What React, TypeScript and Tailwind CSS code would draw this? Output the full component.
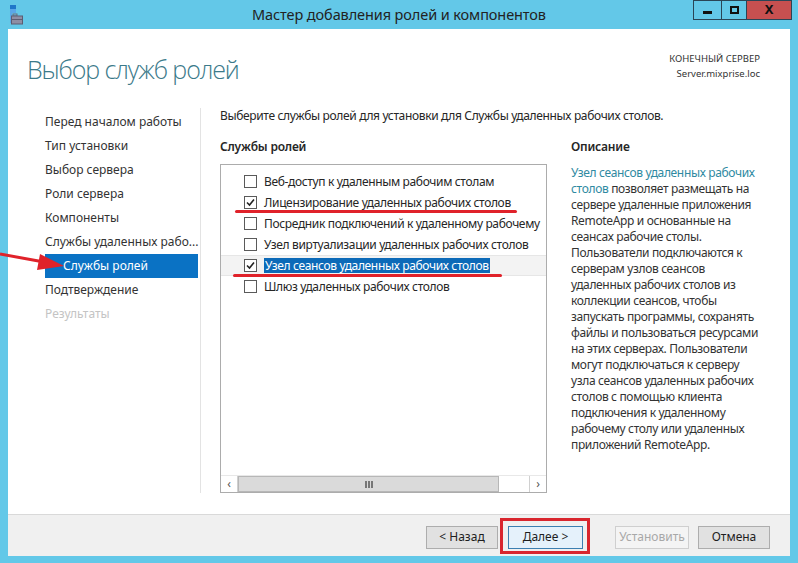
import React from "react";

const navItems = [
  { label: "Перед началом работы" },
  { label: "Тип установки" },
  { label: "Выбор сервера" },
  { label: "Роли сервера" },
  { label: "Компоненты" },
  { label: "Службы удаленных рабо..." },
  { label: "Службы ролей", active: true, sub: true },
  { label: "Подтверждение" },
  { label: "Результаты", disabled: true },
];

const roles = [
  { label: "Веб-доступ к удаленным рабочим столам", checked: false },
  { label: "Лицензирование удаленных рабочих столов", checked: true, mark: "left-[14px] w-[282px]" },
  { label: "Посредник подключений к удаленному рабочему", checked: false },
  { label: "Узел виртуализации удаленных рабочих столов", checked: false },
  { label: "Узел сеансов удаленных рабочих столов", checked: true, selected: true, mark: "left-[12px] w-[269px]" },
  { label: "Шлюз удаленных рабочих столов", checked: false },
];

const descLines = [
  "сервере удаленные приложения",
  "RemoteApp и основанные на",
  "сеансах рабочие столы.",
  "Пользователи подключаются к",
  "серверам узлов сеансов",
  "удаленных рабочих столов из",
  "коллекции сеансов, чтобы",
  "запускать программы, сохранять",
  "файлы и пользоваться ресурсами",
  "на этих серверах. Пользователи",
  "могут подключаться к серверу",
  "узла сеансов удаленных рабочих",
  "столов с помощью клиента",
  "подключения к удаленному",
  "рабочему столу или удаленных",
  "приложений RemoteApp.",
];

function Checkbox({ checked }: { checked: boolean }) {
  return (
    <span className="flex h-[13px] w-[13px] shrink-0 items-center justify-center border border-[#5a5a5a] bg-white">
      {checked && (
        <svg width="11" height="11" viewBox="0 0 11 11">
          <path d="M2 5.5 L4.5 8 L9 2.5" fill="none" stroke="#222" strokeWidth="1.6" />
        </svg>
      )}
    </span>
  );
}

function WinButton({ children, primary, disabled }: { children: React.ReactNode; primary?: boolean; disabled?: boolean }) {
  return (
    <div
      className={
        "flex h-[23px] items-center justify-center border text-[12px] " +
        (primary
          ? "w-[75px] border-[#3c7fb1] bg-[#e5f1fb] text-[#1e1e1e]"
          : disabled
          ? "w-[74px] border-[#cfcfcf] bg-[#f4f4f4] text-[#a8a8a8]"
          : "w-[72px] border-[#adadad] bg-[#e1e1e1] text-[#1e1e1e]")
      }
    >
      {children}
    </div>
  );
}

export default function App() {
  return (
    <div className="relative flex h-[563px] w-[798px] flex-col overflow-hidden bg-[#63c8e8] font-['Noto_Sans',sans-serif] text-[#262626]">
      {/* title bar */}
      <div className="grid h-[29px] grid-cols-[1fr_auto_1fr]">
        <div className="pl-[9px] pt-[5px]">
          <svg width="16" height="20" viewBox="0 0 16 20">
            <rect x="1" y="0" width="6" height="4" fill="#1f77c9" />
            <rect x="1" y="4" width="6" height="4" fill="#5aa7e8" />
            <rect x="1" y="8" width="2" height="10" fill="#5aa7e8" />
            <rect x="4" y="9" width="4" height="2" fill="none" stroke="#6b6b80" strokeWidth="1" />
            <rect x="2.5" y="11" width="11" height="8" fill="#8e8ea4" stroke="#5d5d72" strokeWidth="1" />
            <rect x="2.5" y="14" width="11" height="1" fill="#5d5d72" />
          </svg>
        </div>
        <div className="pt-[4px] text-[14.5px] tracking-[-0.1px] text-[#222]">Мастер добавления ролей и компонентов</div>
        <div className="flex justify-end pr-[6px]">
          <div className="flex h-[20px] w-[28px] items-center justify-center border border-r-0 border-[#2a4556]">
            <span className="mt-[4px] h-[3px] w-[9px] bg-[#111]" />
          </div>
          <div className="flex h-[20px] w-[26px] items-center justify-center border border-[#2a4556]">
            <span className="h-[8px] w-[9px] border-2 border-[#111]" />
          </div>
          <div className="flex h-[20px] w-[45px] items-center justify-center border border-l-0 border-[#2a4556] bg-[#c75050] text-[13px] font-bold text-[#111]">
            X
          </div>
        </div>
      </div>

      {/* window body */}
      <div className="mx-[8px] mb-[7px] flex flex-1 flex-col bg-white">
        <div className="flex h-[79px] justify-between">
          <div className="pl-[19px] pt-[22px] font-['Open_Sans',sans-serif] text-[25px] font-light tracking-[-1.1px] text-[#3b7a8a]">
            Выбор служб ролей
          </div>
          <div className="pr-[30px] pt-[22px] text-right text-[9.5px] leading-[15px] text-[#333]">
            <div>КОНЕЧНЫЙ СЕРВЕР</div>
            <div>Server.mixprise.loc</div>
          </div>
        </div>

        <div className="flex flex-1 pb-[21px]">
          <div className="w-[193px] border-r border-[#e3e3e3] pl-[37px] pr-[2px] pt-[2px]">
            {navItems.map((n) => (
              <div
                key={n.label}
                className={
                  "h-[24px] whitespace-nowrap text-[12px] leading-[24px] " +
                  (n.active
                    ? "bg-[#0a72c4] pl-[18px] text-white"
                    : n.disabled
                    ? "text-[#c4c4c4]"
                    : "text-[#333]")
                }
              >
                {n.label}
              </div>
            ))}
          </div>

          <div className="flex flex-1 flex-col pl-[19px] tracking-[-0.35px]">
            <div className="h-[16px] text-[12px] leading-[16px] text-[#262626]">
              Выберите службы ролей для установки для Службы удаленных рабочих столов.
            </div>
            <div className="mt-[15px] flex flex-1">
              <div className="flex w-[327px] flex-col">
                <div className="h-[16px] text-[12px] font-semibold leading-[16px] tracking-[-0.2px] text-[#262626]">Службы ролей</div>
                <div className="mt-[9px] flex flex-1 flex-col overflow-hidden border border-[#acacac]">
                  <div className="flex-1 pt-[6px]">
                    {roles.map((r) => (
                      <div
                        key={r.label}
                        className={
                          "relative flex h-[21px] items-center gap-[7px] whitespace-nowrap pl-[23px] text-[12px] " +
                          (r.selected ? "border-y border-[#e6e6e6] bg-[#f3f3f3]" : "")
                        }
                      >
                        <Checkbox checked={r.checked} />
                        <span className={r.selected ? "bg-[#0c6ab8] px-[1px] leading-[15px] text-white" : "text-[#262626]"}>
                          {r.label}
                        </span>
                        {r.mark && <span className={"absolute top-[18px] h-[3px] rounded-full bg-[#e0222a] " + r.mark} />}
                      </div>
                    ))}
                  </div>
                  <div className="flex h-[17px] border-t border-[#e8e8e8] bg-white">
                    <div className="flex w-[17px] items-center justify-center border-r border-[#d0d0d0] text-[12px] text-[#555]">‹</div>
                    <div className="flex w-[261px] items-center justify-center border border-[#b7b7b7] bg-[#dadada]">
                      <svg width="8" height="7" viewBox="0 0 8 7">
                        <rect x="0" y="0" width="2" height="7" fill="#777" />
                        <rect x="3" y="0" width="2" height="7" fill="#777" />
                        <rect x="6" y="0" width="2" height="7" fill="#777" />
                      </svg>
                    </div>
                    <div className="flex-1" />
                    <div className="flex w-[17px] items-center justify-center border-l border-[#d0d0d0] text-[12px] text-[#555]">›</div>
                  </div>
                </div>
              </div>

              <div className="ml-[24px] flex-1">
                <div className="h-[16px] text-[12px] font-semibold leading-[16px] tracking-[-0.2px] text-[#262626]">Описание</div>
                <div className="mt-[10px] whitespace-nowrap text-[12px] leading-[16px] text-[#333]">
                  <div className="text-[#2f8aa2]">Узел сеансов удаленных рабочих</div>
                  <div>
                    <span className="text-[#2f8aa2]">столов</span> позволяет размещать на
                  </div>
                  {descLines.map((l) => (
                    <div key={l}>{l}</div>
                  ))}
                </div>
              </div>
            </div>
          </div>
        </div>

        <div className="flex h-[42px] items-center justify-end border-t border-[#d9d9d9] bg-[#f0f0f0] pr-[20px] pt-[3px]">
          <WinButton>&lt; Назад</WinButton>
          <div className="relative ml-[10px]">
            <WinButton primary>Далее &gt;</WinButton>
            <span className="absolute bottom-[-5px] left-[-8px] right-[-7px] top-[-8px] border-[3px] border-[#d9262e]" />
          </div>
          <div className="ml-[32px]">
            <WinButton disabled>Установить</WinButton>
          </div>
          <div className="ml-[9px]">
            <WinButton>Отмена</WinButton>
          </div>
        </div>
      </div>

      {/* red annotation arrow */}
      <svg className="absolute left-0 top-[248px]" width="70" height="24" viewBox="0 0 70 24">
        <line x1="0" y1="6" x2="44" y2="14" stroke="#e0222a" strokeWidth="3" />
        <polygon points="40,6 64,18 37,22" fill="#e0222a" />
      </svg>
    </div>
  );
}
